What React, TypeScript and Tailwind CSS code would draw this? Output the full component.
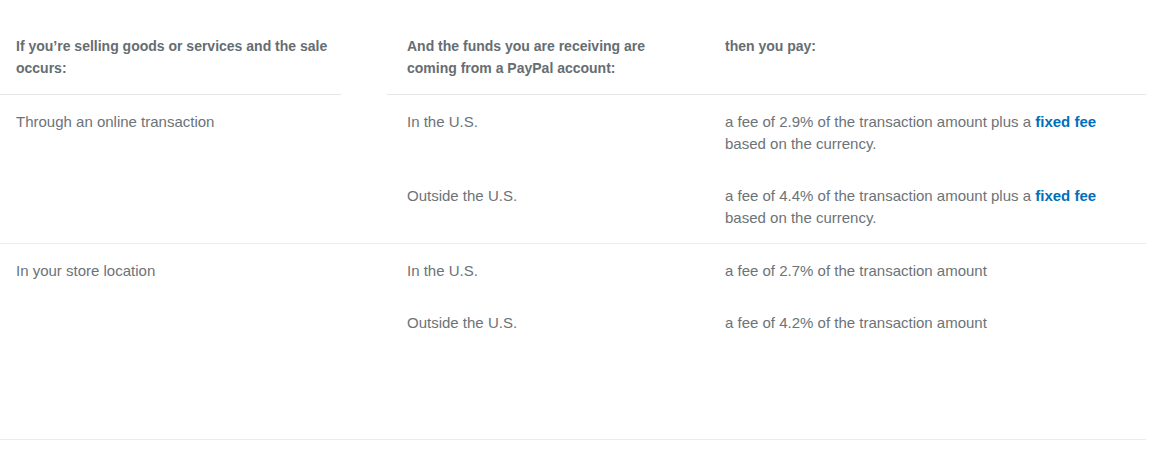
import React from "react";

const Fee = ({ pct, fixed }: { pct: string; fixed?: boolean }) => (
  <span>
    a fee of {pct} of the transaction amount
    {fixed ? (
      <>
        {" "}plus a <a className="font-bold text-[#0070ba]">fixed fee</a> based on the currency.
      </>
    ) : null}
  </span>
);

export default function App() {
  const rows = [
    {
      label: "Through an online transaction",
      subs: [
        { where: "In the U.S.", pct: "2.9%", fixed: true },
        { where: "Outside the U.S.", pct: "4.4%", fixed: true },
      ],
    },
    {
      label: "In your store location",
      subs: [
        { where: "In the U.S.", pct: "2.7%", fixed: false },
        { where: "Outside the U.S.", pct: "4.2%", fixed: false },
      ],
    },
  ];
  return (
    <div
      className="w-[1151px] h-[452px] bg-white text-[15px] leading-[22px] text-[#6c7378]"
      style={{ fontFamily: "'Liberation Sans', Arial, sans-serif" }}
    >
      <div className="w-[1146px] pt-[35px]">
        <div className="flex font-bold text-[14px] text-[#666d72]">
          <div className="w-[341px] pl-4 pb-[15px] border-b border-[#e6e6e6]">
            <div className="w-[318px]">If you’re selling goods or services and the sale occurs:</div>
          </div>
          <div className="w-[46px]" />
          <div className="flex-1 flex border-b border-[#e6e6e6]">
            <div className="w-[338px] pl-5">
              <div className="w-[250px]">And the funds you are receiving are coming from a PayPal account:</div>
            </div>
            <div className="flex-1">then you pay:</div>
          </div>
        </div>
        {rows.map((r, i) => (
          <div
            key={i}
            className={`flex pt-4 border-b border-[#ececec] ${i === 0 ? "pb-[14px]" : "pb-[105px]"}`}
          >
            <div className="w-[391px] pl-4">{r.label}</div>
            <div className="flex-1 flex flex-col gap-[30px]">
              {r.subs.map((s, j) => (
                <div key={j} className="flex">
                  <div className="w-[334px] pl-4">{s.where}</div>
                  <div className="flex-1">
                    <div className="w-[380px]">
                      <Fee pct={s.pct} fixed={s.fixed} />
                    </div>
                  </div>
                </div>
              ))}
            </div>
          </div>
        ))}
      </div>
    </div>
  );
}
